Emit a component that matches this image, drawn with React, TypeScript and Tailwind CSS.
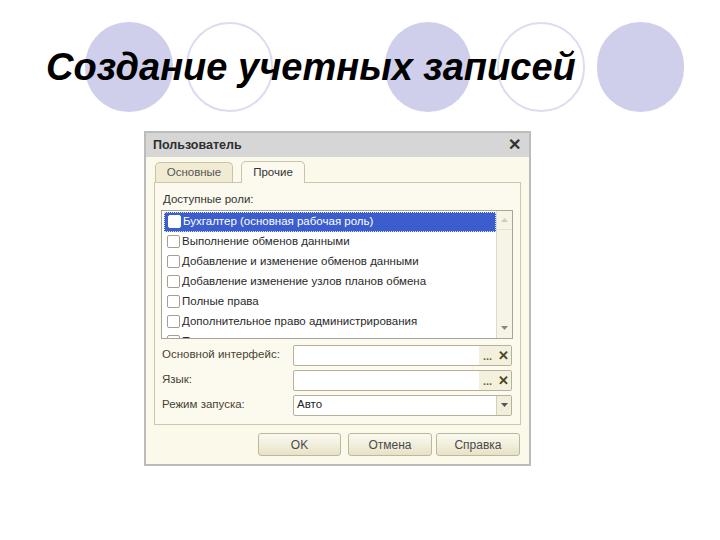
const roles = [
  "Бухгалтер (основная рабочая роль)",
  "Выполнение обменов данными",
  "Добавление и изменение обменов данными",
  "Добавление изменение узлов планов обмена",
  "Полные права",
  "Дополнительное право администрирования",
  "Право администрирования",
];

function Checkbox({ active }: { active?: boolean }) {
  return (
    <span
      className={
        "w-[13px] h-[13px] shrink-0 rounded-[2px] border " +
        (active ? "bg-white border-white" : "bg-white border-[#a3a08f]")
      }
    />
  );
}

function Field({ label, value, kind }: { label: string; value?: string; kind: "pick" | "select" }) {
  return (
    <div className="flex items-center h-[21px]">
      <span className="w-[131px] shrink-0 text-[#4a3f33]">{label}</span>
      <div className="flex-1 h-full flex border border-[#b5b19b] rounded-[2px] bg-white">
        <div className="flex-1 flex items-center pl-[3px] text-[#222]">{value}</div>
        {kind === "pick" ? (
          <>
            <div className="w-[17px] bg-[#f3f0dd] flex items-end justify-center pb-[3px] text-[#6b6428] text-[11px] leading-none font-bold">
              ...
            </div>
            <div className="w-[15px] bg-[#f3f0dd] flex items-center justify-center text-[#4a4420] text-[13px] font-bold leading-none">
              ✕
            </div>
          </>
        ) : (
          <div className="w-[15px] bg-[#f1eedb] border-l border-[#d4d0b8] flex items-center justify-center">
            <svg width="7" height="4" viewBox="0 0 7 4">
              <path d="M0 0h7L3.5 4z" fill="#555" />
            </svg>
          </div>
        )}
      </div>
    </div>
  );
}

export default function App() {
  return (
    <div className="w-[720px] h-[540px] bg-white overflow-hidden font-['Liberation_Sans',Arial,sans-serif]">
      <div className="relative h-[131px]">
        <div className="flex items-start pt-[22px]">
          <div className="ml-[85px] w-[88px] h-[90px] rounded-full bg-[#cfcfec]" />
          <div className="ml-[13px] w-[87px] h-[90px] rounded-full bg-white border-2 border-[#dcdcf0]" />
          <div className="ml-[112px] w-[86px] h-[90px] rounded-full bg-[#cfcfec]" />
          <div className="ml-[26px] w-[88px] h-[90px] rounded-full bg-white border-2 border-[#dcdcf0]" />
          <div className="ml-[12px] w-[87px] h-[90px] rounded-full bg-[#cfcfec]" />
        </div>
        <h1 className="absolute left-[46px] top-[48px] text-[38px] leading-none font-bold italic text-black">
          Создание учетных записей
        </h1>
      </div>

      <div className="ml-[144px] w-[387px] h-[335px] border-2 border-[#bcbcbc] bg-[#fbf9ea] flex flex-col text-[11.5px] leading-none">
        <div className="h-[24px] bg-[#d6d6d6] flex items-center justify-between pl-[7px] pr-[8px]">
          <span className="font-bold text-[12.5px] text-[#2e2e2e]">Пользователь</span>
          <span className="text-[16px] font-bold text-[#333]">✕</span>
        </div>

        <div className="mx-[8px] mt-[5px] flex items-end h-[20px] relative z-10">
          <div className="ml-[1px] w-[78px] h-[20px] rounded-t-[5px] border border-b-0 border-[#c9c4a8] bg-[#f0ebd2] flex items-center justify-center text-[#555]">
            Основные
          </div>
          <div className="ml-[8px] w-[64px] h-[22px] mb-[-1px] rounded-t-[5px] border border-b-0 border-[#c9c4a8] bg-[#fcfaee] flex items-center justify-center text-[#333]">
            Прочие
          </div>
        </div>

        <div className="mx-[8px] h-[243px] border border-[#cdc8ad] bg-[#fcfaee] flex flex-col">
          <div className="pl-[8px] pt-[11px] text-[#333]">Доступные роли:</div>
          <div className="ml-[6px] mt-[4px] w-[352px] h-[129px] border border-[#a7a596] bg-white flex overflow-hidden">
            <div className="flex-1 pt-[1px] pl-[2px]">
              {roles.map((r, i) => (
                <div
                  key={r}
                  className={
                    "h-[20px] flex items-center gap-[2px] pl-[3px] " +
                    (i === 0
                      ? "bg-[#3c5dcd] text-white border border-dotted border-[#dfe6ff]"
                      : "text-[#2a2a2a]")
                  }
                >
                  <Checkbox active={i === 0} />
                  <span>{r}</span>
                </div>
              ))}
            </div>
            <div className="w-[16px] bg-[#f6f4e6] border-l border-[#dddac6] flex flex-col justify-between">
              <div className="h-[19px] flex items-center justify-center border-b border-[#e4e1ce]">
                <svg width="7" height="4" viewBox="0 0 7 4">
                  <path d="M3.5 0L7 4H0z" fill="#cfccb8" />
                </svg>
              </div>
              <div className="h-[19px] flex items-center justify-center">
                <svg width="7" height="4" viewBox="0 0 7 4">
                  <path d="M0 0h7L3.5 4z" fill="#8a887a" />
                </svg>
              </div>
            </div>
          </div>

          <div className="ml-[7px] mr-[8px] mt-[6px] flex flex-col gap-[4px]">
            <Field label="Основной интерфейс:" kind="pick" />
            <Field label="Язык:" kind="pick" />
            <Field label="Режим запуска:" value="Авто" kind="select" />
          </div>
        </div>

        <div className="flex mt-[8px] pr-[9px] justify-end text-[#4a4a4a] text-[12px]">
          <button className="w-[83px] h-[23px] rounded-[3px] border border-[#bcb79d] bg-gradient-to-b from-[#fbfaf1] to-[#e7e2c7]">
            OK
          </button>
          <button className="ml-[7px] w-[84px] h-[23px] rounded-[3px] border border-[#bcb79d] bg-gradient-to-b from-[#fbfaf1] to-[#e7e2c7]">
            Отмена
          </button>
          <button className="ml-[4px] w-[84px] h-[23px] rounded-[3px] border border-[#bcb79d] bg-gradient-to-b from-[#fbfaf1] to-[#e7e2c7]">
            Справка
          </button>
        </div>
      </div>
    </div>
  );
}
